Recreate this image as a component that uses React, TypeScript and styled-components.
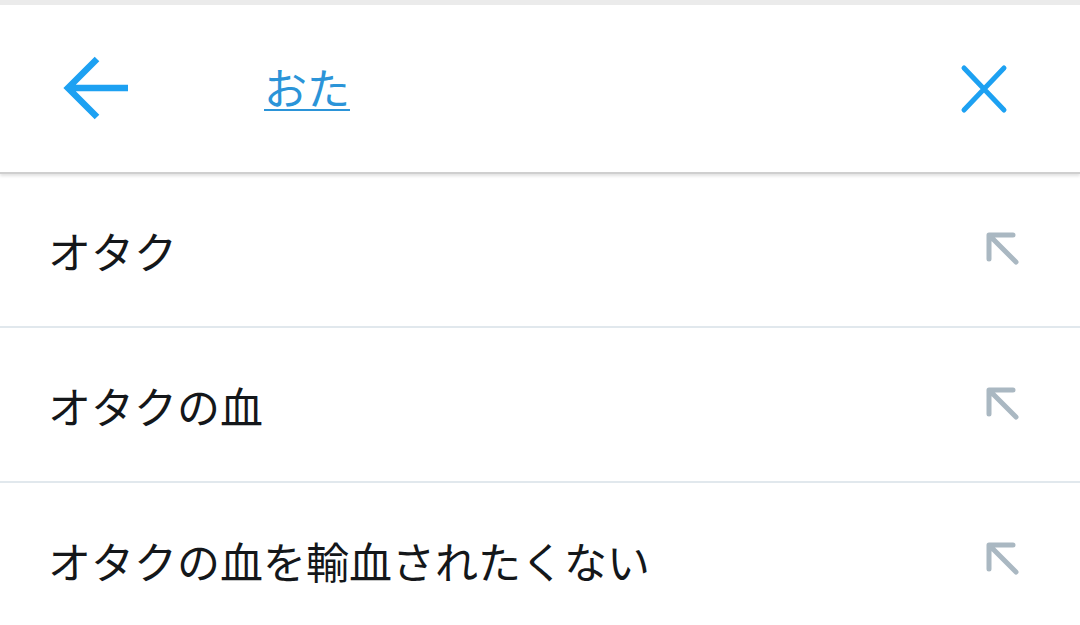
import styled, { createGlobalStyle } from "styled-components";

const GlobalStyle = createGlobalStyle`
  html, body {
    margin: 0;
    padding: 0;
    background: #ffffff;
  }
  body {
    font-family: "Noto Sans CJK JP", "Noto Sans", sans-serif;
  }
`;

// start of styled-components

const Page = styled.div`
  width: 1080px;
  height: 625px;
  overflow: hidden;
  background: #ffffff;
  border-top: 5px solid #ebebeb;
  box-sizing: border-box;
`;

const Header = styled.header`
  height: 167px;
  display: flex;
  align-items: center;
  padding: 0 56px 0 60px;
  background: #ffffff;
  border-bottom: 2px solid #cfcfcf;
  box-shadow: 0 2px 3px rgba(0, 0, 0, 0.12);
  position: relative;
  z-index: 1;
`;

const IconButton = styled.button`
  width: 72px;
  height: 72px;
  border: none;
  background: none;
  padding: 0;
  display: flex;
  align-items: center;
  justify-content: center;
  cursor: pointer;
`;

const Query = styled.a`
  margin-left: 132px;
  flex: 1;
  font-size: 43px;
  line-height: 1;
  color: #2b94d8;
  text-decoration: underline;
  text-decoration-thickness: 2px;
  text-underline-offset: 4px;
  margin-bottom: 4px;
`;

const List = styled.ul`
  list-style: none;
  margin: 0;
  padding: 0;
`;

const Row = styled.li`
  height: 155px;
  display: flex;
  align-items: center;
  justify-content: space-between;
  padding: 0 55px 0 48px;
  border-bottom: 2px solid #e1e8ed;
  box-sizing: border-box;
  &:first-child {
    height: 154px;
  }
`;

const RowText = styled.span`
  font-size: 43px;
  color: #14171a;
`;

// end of styled-components

function BackArrow() {
  return (
    <svg width="72" height="72" viewBox="0 0 72 72">
      <path
        d="M37 6 L8 35 L37 64 M8 35 L68 35"
        fill="none"
        stroke="#1da1f2"
        strokeWidth="6.5"
      />
    </svg>
  );
}

function CloseIcon() {
  return (
    <svg width="72" height="72" viewBox="0 0 72 72">
      <path
        d="M12 15 L52 57 M52 15 L12 57"
        fill="none"
        stroke="#1da1f2"
        strokeWidth="5"
        strokeLinecap="round"
      />
    </svg>
  );
}

function FillArrow() {
  return (
    <svg width="40" height="40" viewBox="0 0 40 40">
      <path
        d="M4 29 L4 5 L28 5 M5 6 L31 32"
        fill="none"
        stroke="#aab8c2"
        strokeWidth="5"
        strokeLinecap="round"
        strokeLinejoin="round"
      />
    </svg>
  );
}

const suggestions = ["オタク", "オタクの血", "オタクの血を輸血されたくない"];

function App() {
  return (
    <Page>
      <GlobalStyle />
      <Header>
        <IconButton aria-label="戻る">
          <BackArrow />
        </IconButton>
        <Query href="#">おた</Query>
        <IconButton aria-label="クリア">
          <CloseIcon />
        </IconButton>
      </Header>
      <List>
        {suggestions.map((s) => (
          <Row key={s}>
            <RowText>{s}</RowText>
            <FillArrow />
          </Row>
        ))}
      </List>
    </Page>
  );
}

export default App;
